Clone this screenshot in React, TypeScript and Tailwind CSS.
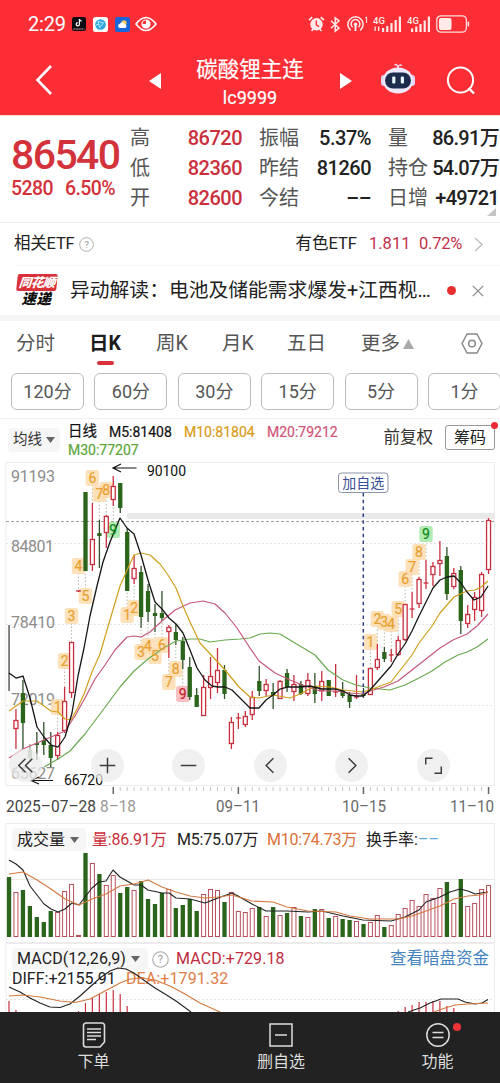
import type { ReactNode } from 'react'

type Candle = [kind: 'r' | 'g', high: number, low: number, top: number, bottom: number]

const STEP = 6.95
const cx = (i: number) => 9 + i * STEP

const RED = '#c9303f'
const GREEN = '#2b641b'

const candles: Candle[] = [
  ['g', 625, 691, 690, 691], ['r', 709, 749, 720, 729], ['g', 680, 749, 693, 723], ['g', 744, 762, 750, 758],
  ['g', 732, 760, 743, 745], ['g', 722, 755, 740, 745], ['g', 732, 767, 745, 758], ['r', 732, 760, 735, 756],
  ['r', 687, 733, 701, 731], ['r', 642, 698, 642, 693], ['r', 590, 592, 591, 591], ['g', 492, 571, 492, 571],
  ['r', 503, 571, 539, 565], ['g', 520, 568, 533, 536], ['r', 515, 548, 516, 533], ['r', 476, 506, 486, 500],
  ['g', 483, 513, 483, 508], ['g', 528, 591, 532, 591], ['r', 555, 584, 568, 579], ['g', 566, 628, 572, 617],
  ['g', 584, 622, 591, 612], ['g', 604, 632, 613, 616], ['g', 591, 621, 613, 618], ['r', 625, 658, 627, 632],
  ['g', 624, 645, 632, 640], ['g', 637, 669, 641, 660], ['g', 657, 700, 667, 697], ['g', 688, 707, 695, 707],
  ['r', 675, 716, 687, 716], ['r', 657, 699, 676, 688], ['r', 648, 693, 670, 683], ['g', 665, 699, 670, 694],
  ['r', 717, 749, 722, 744], ['r', 713, 729, 718, 718], ['r', 711, 727, 716, 725], ['r', 691, 720, 697, 715],
  ['g', 666, 696, 681, 691], ['r', 679, 696, 684, 691], ['g', 683, 709, 692, 696], ['r', 680, 699, 681, 699],
  ['g', 669, 692, 673, 687], ['r', 675, 701, 684, 692], ['g', 681, 695, 684, 694], ['r', 673, 696, 680, 694],
  ['g', 673, 703, 686, 694], ['r', 671, 701, 681, 691], ['g', 680, 696, 680, 696], ['r', 664, 697, 692, 692],
  ['g', 682, 698, 690, 696], ['g', 692, 708, 695, 702], ['r', 675, 699, 697, 697], ['g', 688, 698, 694, 696],
  ['r', 668, 695, 668, 695], ['r', 644, 670, 659, 668], ['g', 647, 662, 652, 659], ['r', 649, 662, 655, 655],
  ['r', 636, 656, 640, 655], ['r', 604, 641, 604, 640], ['r', 592, 618, 609, 609], ['r', 577, 608, 579, 604],
  ['r', 560, 589, 583, 583], ['r', 562, 586, 566, 575], ['r', 541, 576, 560, 564], ['g', 547, 600, 556, 594],
  ['r', 568, 589, 573, 587], ['g', 566, 634, 570, 621], ['r', 605, 628, 614, 624], ['r', 592, 621, 597, 610],
  ['r', 572, 617, 574, 611], ['r', 518, 574, 520, 570],
]

// bar heights in px, measured from the baseline of the volume panel
const volumes = [
  60, 45, 47, 31, 20, 15, 26, 25, 46, 53, 2, 84, 74, 63, 52, 62, 44, 50, 47, 56, 38, 33, 44, 48, 29, 32, 38, 26, 43,
  48, 47, 35, 45, 26, 25, 29, 30, 21, 30, 22, 24, 30, 21, 20, 28, 28, 19, 21, 18, 17, 16, 13, 15, 22, 10, 12, 23, 29,
  37, 31, 43, 39, 49, 55, 34, 58, 31, 34, 48, 52,
]

const ma5 = '9,673 16,678 23,676 30,698 37,727 44,737 51,745 58,747 65,737 72,713 78,676 84,648 90,616 97,586 103,562 110,542 120,518 127,528 134,534 141,555 148,580 155,602 162,609 169,618 176,624 183,633 190,650 197,668 205,680 212,686 218,687 225,687 232,690 240,698 250,708 259,708 266,700 273,695 280,689 287,687 300,687 310,686 322,689 336,689 343,691 350,695 356,696 363,696 370,690 377,682 384,674 391,666 398,654 405,644 412,631 419,616 426,602 433,588 440,580 447,577 454,576 461,583 467,592 474,600 481,597 488,586'
const ma10 = '9,711 16,706 23,701 37,701 44,706 51,711 58,712 65,719 71,720 77,709 84,694 92,672 100,654 107,630 120,586 128,568 134,555 141,553 150,555 160,564 168,575 176,588 183,606 190,622 200,643 213,657 225,670 239,687 250,697 259,698 273,695 290,698 300,694 315,686 330,687 343,690 363,692 375,688 391,682 405,664 412,655 419,643 432,626 440,613 454,597 467,591 475,590 481,587 488,581'
const ma20 = '9,758 23,749 37,743 51,737 65,731 75,716 85,698 95,679 105,665 115,650 127,637 134,636 141,637 150,632 162,621 175,610 190,603 203,601 215,604 225,613 237,628 250,648 259,661 275,673 290,680 305,686 320,691 336,691 350,693 363,694 370,691 384,687 398,681 412,670 426,659 440,648 453,640 467,634 477,626 488,614'
const ma30 = '44,767 58,759 70,751 85,734 100,714 120,687 134,671 148,659 162,649 176,641 190,639 200,639 210,642 225,640 240,639 250,638 260,634 270,633 280,634 295,643 315,655 328,670 343,680 356,685 370,688 390,690 405,685 419,678 432,671 445,662 458,655 467,652 477,647 488,639'

const volMa5 = '9,860 16,864 23,870 30,886 44,904 51,909 58,912 65,909 72,903 79,905 85,897 92,888 99,882 106,881 113,870 120,877 134,885 141,885 148,890 162,893 169,893 176,898 190,899 205,903 218,898 232,893 238,896 252,904 266,911 287,911 308,912 322,911 343,916 363,920 391,921 405,917 419,910 426,902 440,897 450,892 460,889 468,891 475,894 488,892'
const volMa10 = '9,874 23,872 37,880 51,889 65,899 79,905 92,899 106,894 120,886 134,884 148,880 162,887 176,892 190,896 205,898 218,897 232,895 252,901 273,902 287,907 308,911 336,912 350,916 370,919 398,919 412,916 426,911 440,906 454,899 468,896 480,895 488,892'

const marks: [i: number, y: number, text: string, tone: 'o' | 'g' | 'r'][] = [
  [7, 707, '1', 'o'], [8, 661, '2', 'o'], [9, 616, '3', 'o'], [10, 566, '4', 'o'], [11, 596, '5', 'o'],
  [12, 478, '6', 'o'], [13, 494, '7', 'o'], [14, 490, '8', 'o'], [15, 530, '9', 'g'],
  [17, 615, '1', 'o'], [18, 608, '2', 'o'], [19, 652, '3', 'o'], [20, 646, '4', 'o'], [21, 656, '5', 'o'],
  [22, 645, '6', 'o'], [23, 682, '7', 'o'], [24, 669, '8', 'o'], [25, 694, '9', 'r'],
  [52, 642, '1', 'o'], [53, 619, '2', 'o'], [54, 622, '3', 'o'], [55, 624, '4', 'o'], [56, 609, '5', 'o'],
  [57, 579, '6', 'o'], [58, 567, '7', 'o'], [59, 552, '8', 'o'], [60, 534, '9', 'g'],
]

const tones = {
  o: { bg: '#fddcae', fg: '#e9a02f' },
  g: { bg: '#a3e6a5', fg: '#128a1c' },
  r: { bg: '#f9b4ba', fg: '#c4232f' },
}

function StatusBar() {
  return (
    <div className="h-[46px] shrink-0 flex items-center justify-between pl-7 pr-[30px] pt-0.5 text-white">
      <div className="flex items-center gap-[7px]">
        <span className="text-[20px] leading-none tracking-[-0.2px] w-[37px]">2:29</span>
        <svg width="14" height="14" viewBox="0 0 14 14">
          <rect width="14" height="14" rx="2.5" fill="#0b0b10" />
          <path d="M7.4 2v5.2a1.6 1.6 0 1 1-1.6-1.6M7.4 2.2c.2 1.3 1 1.900 2.200 2" fill="none" stroke="#fff" strokeWidth="1.2" />
          <path d="M1.5 12h11" stroke="#d9a5ab" strokeWidth="1" strokeDasharray="2 .6" />
        </svg>
        <svg width="15" height="15" viewBox="0 0 15 15">
          <rect width="15" height="15" rx="2.5" fill="#fff" />
          <circle cx="7.5" cy="7.5" r="5.3" fill="#31a7de" />
          <path d="M5 4.5l5.5 1.4-3.8 4.6zM3 8l3-1" fill="none" stroke="#bff0ff" strokeWidth=".9" />
        </svg>
        <svg width="15" height="15" viewBox="0 0 15 15">
          <rect width="15" height="15" rx="2.5" fill="#1765d8" />
          <circle cx="9" cy="5.8" r="2.6" fill="#f6cf63" />
          <path d="M4.8 11a2.2 2.2 0 0 1 0-4.3 2.8 2.8 0 0 1 5 .6 1.9 1.9 0 0 1 .4 3.7z" fill="#fff" />
        </svg>
        <svg width="22" height="16" viewBox="0 0 22 16" className="-ml-0.5">
          <path d="M1 8Q11-5 21 8 11 21 1 8z" fill="none" stroke="#fff" strokeWidth="1.6" />
          <circle cx="11" cy="8" r="4.6" fill="#fff" />
          <path d="M11 8V4.6A3.4 3.4 0 0 0 7.6 8z" fill="#fb2e35" />
        </svg>
      </div>
      <div className="flex items-center gap-[5px]">
        <svg width="17" height="16" viewBox="0 0 17 16">
          <circle cx="8.5" cy="8.3" r="6.2" fill="#ffe9e9" />
          <path d="M1 4.2L4.2 1.2M16 4.2l-3.2-3M3.5 15l1.8-2M13.5 15l-1.8-2" stroke="#ffe9e9" strokeWidth="1.7" />
          <path d="M8.3 4.5v4.3l2.8 1.8" fill="none" stroke="#fb2e35" strokeWidth="1.4" />
        </svg>
        <svg width="11" height="17" viewBox="0 0 11 17" fill="none" stroke="#ffe9e9" strokeWidth="1.5">
          <path d="M1 4.8l8 7.4-3.8 3V1.8L9 4.8l-8 7.4" />
        </svg>
        <svg width="22" height="18" viewBox="0 0 22 18" fill="none" stroke="#ffe9e9" strokeWidth="1.5">
          <path d="M4.7 15.3a7.6 7.6 0 1 1 9.6 0M6.6 12.3a4.4 4.4 0 1 1 5.8 0" />
          <circle cx="9.5" cy="9.2" r="1.8" fill="#ffe9e9" stroke="none" />
          <path d="M9.5 10v6" strokeWidth="2" />
          <path d="M19 3l1.6-1v6" strokeWidth="1" />
        </svg>
        <svg width="29" height="18" viewBox="0 0 29 18" fill="#ffe9e9">
          <text x="0" y="8.5" fontSize="9.5" fontWeight="500">4G</text>
          <path d="M1.5 11.5h1.3V16H1.5zM5 11.5h1.3V16H5zM9 13h2.2v4H9zM13.2 11h2.2v6h-2.2zM17.4 8h2.2v9h-2.2zM21.6 5h2.2v12h-2.2zM25.8 1.5H28V17h-2.2z" />
        </svg>
        <svg width="24" height="18" viewBox="0 0 24 18" fill="#ffe9e9">
          <text x="0" y="8.5" fontSize="9.5" fontWeight="500">4G</text>
          <path d="M4 13.500h2.200V17H4zM8.200 11.500h2.200V17H8.200zM12.400 9h2.200v8h-2.200zM16.600 5.500h2.200V17h-2.200zM20.800 1.500H23V17h-2.200z" />
        </svg>
        <svg width="34" height="18" viewBox="0 0 34 18">
          <rect x=".8" y=".8" width="29.6" height="16.4" rx="4.2" fill="none" stroke="#ffdede" strokeWidth="1.3" />
          <rect x="3" y="3" width="12.5" height="12" rx="2" fill="#ffeaea" />
          <rect x="31.6" y="6.5" width="1.6" height="5" rx=".8" fill="#ffdede" />
        </svg>
      </div>
    </div>
  )
}

function TitleBar() {
  return (
    <div className="h-[69px] shrink-0 flex items-center text-white">
      <svg width="20" height="32" viewBox="0 0 20 32" className="ml-[34px] -mt-1">
        <path d="M17 3L3.5 17 17 31" fill="none" stroke="#fff" strokeWidth="2.6" />
      </svg>
      <svg width="12" height="18" viewBox="0 0 12 18" className="ml-[95px]">
        <path d="M12 1v16L0 9z" fill="#fff" />
      </svg>
      <div className="w-[178px] text-center pt-1">
        <div className="text-[21.5px] leading-[30px] [-webkit-text-stroke:0.2px_white]">碳酸锂主连</div>
        <div className="text-[18px] leading-[26px] [-webkit-text-stroke:0.2px_white]">lc9999</div>
      </div>
      <svg width="12" height="18" viewBox="0 0 12 18" className="ml-px">
        <path d="M0 1v16l12-8z" fill="#fff" />
      </svg>
      <svg width="36" height="34" viewBox="0 0 36 34" className="ml-[28px] -mt-1">
        <path d="M18 6c0-3-1.500-4-3.500-3M18 5c.5-2 2.500-2.500 4-1.500" fill="none" stroke="#f4d8ee" strokeWidth="1.5" />
        <rect x="1" y="13" width="6" height="11" rx="3" fill="#d8d3f7" />
        <rect x="29" y="13" width="6" height="11" rx="3" fill="#d8d3f7" />
        <ellipse cx="18" cy="18.5" rx="15.2" ry="13" fill="#eee9fd" />
        <rect x="5" y="10.5" width="26" height="16" rx="8" fill="#1d2b4c" />
        <rect x="12.2" y="14.5" width="3.2" height="7" rx="1" fill="#e9f6ff" />
        <rect x="20.8" y="14.5" width="3.2" height="7" rx="1" fill="#e9f6ff" />
      </svg>
      <svg width="30" height="30" viewBox="0 0 30 30" className="ml-[30px]" fill="none" stroke="#fff" strokeWidth="2">
        <circle cx="14.5" cy="14" r="12.6" />
        <path d="M22.5 22l5.500 5.500" strokeWidth="2.4" />
      </svg>
    </div>
  )
}

function Quote() {
  const left = [['高', '86720'], ['低', '82360'], ['开', '82600']]
  const mid = [['振幅', '5.37%'], ['昨结', '81260'], ['今结', '––']]
  const right = [['量', '86.91万'], ['持仓', '54.07万'], ['日增', '+49721']]
  return (
    <div className="relative h-[108px] shrink-0 flex border-t border-[#fbdcd2] border-b border-b-[#eeeeee] pt-[7px] text-[20px]">
      <div className="w-[130px] pl-[11px] pt-[10px] text-[#d3323b]">
        <div className="text-[41px] leading-[44px] font-medium tracking-[-1.6px]">86540</div>
        <div className="flex gap-[12px] text-[19.5px] leading-6 tracking-[-0.6px] font-medium">
          <span>5280</span>
          <span>6.50%</span>
        </div>
      </div>
      <div className="w-[112px]">
        {left.map(([k, v]) => (
          <div key={k} className="flex justify-between leading-[30px] text-[#555]">
            {k}<span className="text-[#c9303c] font-medium tracking-[-0.5px]">{v}</span>
          </div>
        ))}
      </div>
      <div className="w-[112px] ml-[17px]">
        {mid.map(([k, v]) => (
          <div key={k} className="flex justify-between leading-[30px] text-[#555]">
            {k}<span className="text-[#222] font-medium tracking-[-0.5px]">{v}</span>
          </div>
        ))}
      </div>
      <div className="w-[111px] ml-[17px]">
        {right.map(([k, v]) => (
          <div key={k} className="flex justify-between leading-[30px] text-[#555] whitespace-nowrap">
            {k}<span className="text-[#222] font-medium tracking-[-0.7px]">{v}</span>
          </div>
        ))}
      </div>
      <svg width="9" height="8" viewBox="0 0 9 8" className="absolute right-1 bottom-[6px]">
        <path d="M9 0v8H0z" fill="#c6c6c6" />
      </svg>
    </div>
  )
}

function EtfRow() {
  return (
    <div className="h-[42px] shrink-0 flex items-center pl-[14px] pr-[17px] text-[16.5px] text-[#222]">
      <span className="tracking-[-0.2px]">相关ETF</span>
      <Help className="ml-1" size={15} />
      <span className="ml-auto">有色ETF</span>
      <span className="ml-[12px] text-[#c2304a] w-[42px]">1.811</span>
      <span className="ml-[8px] text-[#c2304a] w-[47px] tracking-[-0.2px]">0.72%</span>
      <svg width="9" height="15" viewBox="0 0 9 15" className="ml-[8px]">
        <path d="M1 1l7 6.5L1 14" fill="none" stroke="#bbb" strokeWidth="1.3" />
      </svg>
    </div>
  )
}

function Help({ className, size }: { className?: string; size: number }) {
  return (
    <svg width={size} height={size} viewBox="0 0 16 16" className={className}>
      <circle cx="8" cy="8" r="7.3" fill="none" stroke="#aaa" strokeWidth="1" />
      <text x="8" y="11.6" textAnchor="middle" fontSize="10.5" fill="#999">?</text>
    </svg>
  )
}

function NewsRow() {
  return (
    <div className="h-[50px] shrink-0 flex items-center border-t border-[#f4f4f4] ml-4 pr-4">
      <div className="w-[41px] flex flex-col items-center italic font-black leading-none">
        <span className="w-[40px] h-[17px] -skew-x-6 rounded-[2px] bg-[#d9303a] text-white text-[12.5px] leading-[17px] text-center tracking-[-0.5px]">同花顺</span>
        <span className="text-[14.5px] leading-[17px] text-[#111] tracking-[0.5px]">速递</span>
      </div>
      <span className="ml-[13px] w-[364px] whitespace-nowrap text-[19.8px] text-[#222]">异动解读：电池及储能需求爆发+江西枧…</span>
      <span className="w-[9px] h-[9px] ml-[13px] shrink-0 rounded-full bg-[#e83030]" />
      <svg width="12" height="12" viewBox="0 0 12 12" className="ml-auto shrink-0">
        <path d="M.8.8l10.400 10.400M11.200.8L.8 11.200" stroke="#888" strokeWidth="1.2" />
      </svg>
    </div>
  )
}

function Tabs() {
  const periods = ['120分', '60分', '30分', '15分', '5分', '1分']
  return (
    <div className="h-[98px] shrink-0 border-b border-[#f0f0f0]">
      <div className="h-[52px] flex text-[19.5px] leading-[46px] text-[#555] pl-[16px] pr-[17px]">
        <span className="w-[73px]">分时</span>
        <span className="w-[67px] font-bold text-[#1c1c1c] relative">
          日K
          <i className="absolute left-[8px] top-[40px] w-[17px] h-1 rounded-full bg-[#d9323a]" />
        </span>
        <span className="w-[66px]">周K</span>
        <span className="w-[65px]">月K</span>
        <span className="w-[74px]">五日</span>
        <span>更多</span>
        <svg width="11" height="10" viewBox="0 0 11 10" className="mt-[18px] ml-[3px]">
          <path d="M5.500 0L11 10H0z" fill="#aaa" />
        </svg>
        <svg width="22" height="21" viewBox="0 0 22 21" className="ml-auto mt-[12px]" fill="none" stroke="#888" strokeWidth="1.5">
          <path d="M6 1h10l5 9.500-5 9.500H6L1 10.500z" strokeLinejoin="round" />
          <circle cx="11" cy="10.5" r="3.3" />
        </svg>
      </div>
      <div className="flex gap-[10.4px] pl-[11px] overflow-hidden">
        {periods.map((p) => (
          <span key={p} className="w-[73px] h-[37px] shrink-0 rounded-[6px] border border-[#bcbcbc] text-center text-[18px] leading-[36px] text-[#555]">
            {p}
          </span>
        ))}
      </div>
    </div>
  )
}

function Caret() {
  return (
    <svg width="9" height="6" viewBox="0 0 9 6" className="shrink-0">
      <path d="M0 0h9L4.500 6z" fill="#666" />
    </svg>
  )
}

function MaRow() {
  return (
    <div className="h-[43px] shrink-0 flex pl-2 pr-[5px] text-[14px]">
      <div className="mt-[9px] w-[52px] h-6 flex items-center gap-1 pl-[5px] rounded-sm bg-[#f6f6f6] text-[14.5px] text-[#333] whitespace-nowrap">
        均线 <Caret />
      </div>
      <div className="ml-2 mt-[4px] leading-[18px] text-[#111] [-webkit-text-stroke:0.2px_currentColor]">
        <div className="flex gap-[11px]">
          <span className="w-[30px] text-[14.5px]">日线</span>
          <span className="w-[64px]">M5:81408</span>
          <span className="w-[72px] text-[#d99a16]">M10:81804</span>
          <span className="text-[#cf5576]">M20:79212</span>
        </div>
        <div className="text-[#5ba63b]">M30:77207</div>
      </div>
      <span className="ml-auto mt-[7px] leading-6 text-[16.5px] text-[#333]">前复权</span>
      <span className="relative ml-3 mt-[6px] w-[50px] h-[25px] border border-[#999] rounded-[3px] text-center text-[16px] leading-[23px] text-[#222]">
        筹码
        <i className="absolute -right-1 -top-1 w-[7px] h-[7px] rounded-full bg-[#ee2b35]" />
      </span>
    </div>
  )
}

function Line({ points, color, width = 1.2 }: { points: string; color: string; width?: number }) {
  return <polyline points={points} fill="none" stroke={color} strokeWidth={width} strokeLinejoin="round" />
}

function KChart() {
  return (
    <div className="relative h-[361px] shrink-0">
      <svg width="500" height="361" viewBox="0 462 500 361">
        <rect x="6" y="462.5" width="488.5" height="323" fill="none" stroke="#ececec" />
        {[543.5, 624.5, 705.5].map((y) => (
          <path key={y} d={`M6 ${y}H494`} stroke="#ddd" strokeDasharray="2 2" strokeWidth=".8" />
        ))}
        <path d="M127 516H494" stroke="#e9e9e9" strokeWidth="6" />
        <path d="M6 521.5H494" stroke="#a5a29b" strokeDasharray="3 2" strokeWidth="1.2" />

        <g fontSize="16" fill="#8c8c8c">
          <text x="11" y="482" textLength="44">91193</text>
          <text x="11" y="552" textLength="43">84801</text>
          <text x="11" y="628" textLength="44">78410</text>
          <text x="11" y="705" textLength="44">72019</text>
          <text x="11" y="779" textLength="44">65627</text>
        </g>

        {marks.map(([i, y]) => {
          const [, high, low] = candles[i]
          const to = y < high ? high : low
          return <path key={i} d={`M${cx(i)} ${y}V${to}`} stroke="#aaa08c" strokeDasharray="1.5 2" strokeWidth=".8" />
        })}

        {marks.map(([i, y, , tone]) => (
          <rect key={i} x={cx(i) - 6.7} y={y - 8} width="13.4" height="16" rx="2.5" fill={tones[tone].bg} fillOpacity=".85" />
        ))}

        {candles.map(([kind, high, low, top, bottom], i) => {
          const x = cx(i)
          if (kind === 'g') {
            return (
              <g key={i} fill={GREEN} opacity={i === 3 ? 0.5 : 1}>
                <rect x={x - 0.6} y={high} width="1.3" height={low - high} fill={i ? '#31502b' : '#444'} />
                {i > 0 && <rect x={x - 2.1} y={top} width="4.3" height={bottom - top} />}
              </g>
            )
          }
          return (
            <g key={i} stroke={RED} strokeWidth="1.3" fill="#fff">
              <path d={`M${x} ${high}V${top}M${x} ${bottom}V${low}`} />
              {bottom - top < 1 ? <path d={`M${x - 2.4} ${top}h4.8`} /> : <rect x={x - 2} y={top + 0.5} width="4" height={bottom - top - 1} />}
            </g>
          )
        })}

        <Line points={ma30} color="#6aaa50" />
        <Line points={ma20} color="#c4587a" />
        <Line points={ma10} color="#cf9f1d" />
        <Line points={ma5} color="#161616" width={1.3} />

        <g fontSize="14" textAnchor="middle">
          {marks.map(([i, y, text, tone]) => (
            <text key={i} x={cx(i)} y={y + 5} fill={tones[tone].fg} stroke={tones[tone].fg} strokeWidth=".2">{text}</text>
          ))}
        </g>

        <path d="M363.3 493V694" stroke="#32428a" strokeWidth="1.5" strokeDasharray="3.5 3.3" />
        <rect x="338.5" y="473" width="49.5" height="19.5" rx="3" fill="#fff" stroke="#8c93a8" />
        <text x="363.3" y="488" textAnchor="middle" fontSize="14" fill="#3a4f94">加自选</text>

        <g fill="none" stroke="#111" strokeWidth="1.2">
          <path d="M136.5 468H114M121 464l-8 4 8 4" />
          <path d="M53 780.5H31M39 777l-8 3.500 8 3.500" />
        </g>
        <g fontSize="14" fill="#111">
          <text x="147" y="476" textLength="39">90100</text>
          <text x="64" y="785" textLength="39">66720</text>
        </g>

        {Array.from({ length: 55 }, (_, k) => k + 15).map((i) => {
          const major = [15, 33, 51, 69].includes(i)
          return <path key={i} d={`M${cx(i)} 787v${major ? 7 : 4}`} stroke={major ? '#666' : '#c4c4c4'} strokeWidth={major ? 1.5 : 1} />
        })}
        <g fontSize="16.5" fill="#6a6a6a" lengthAdjust="spacingAndGlyphs">
          <text x="6" y="811.5" textLength="90" lengthAdjust="spacingAndGlyphs" fill="#444">2025–07–28</text>
          <text x="100" y="811.5" textLength="36" lengthAdjust="spacingAndGlyphs" fill="#999">8–18</text>
          <text x="216" y="811.5" textLength="44" lengthAdjust="spacingAndGlyphs">09–11</text>
          <text x="342" y="811.5" textLength="44" lengthAdjust="spacingAndGlyphs">10–15</text>
          <text x="450" y="811.5" textLength="44" lengthAdjust="spacingAndGlyphs">11–10</text>
        </g>
      </svg>

      <div className="absolute left-[9px] top-[287px] flex gap-[48.5px]">
        <RoundButton><path d="M17 10l-7 7 7 7M24 10l-7 7 7 7" /></RoundButton>
        <RoundButton><path d="M17 9v16M9 17h16" /></RoundButton>
        <RoundButton><path d="M9 17h16" /></RoundButton>
        <RoundButton><path d="M20 9.500L12.500 17l7.500 7.500" /></RoundButton>
        <RoundButton><path d="M14 9.500l7.500 7.500-7.500 7.500" /></RoundButton>
        <RoundButton><path d="M9 16V9.500h7M25 18v7h-7" /></RoundButton>
      </div>
    </div>
  )
}

function RoundButton({ children }: { children: ReactNode }) {
  return (
    <span className="w-[33px] h-[33px] shrink-0 rounded-full bg-[#ebebeb]/75">
      <svg width="33" height="33" viewBox="0 0 34 34" fill="none" stroke="#3c3c3c" strokeWidth="1.5">{children}</svg>
    </span>
  )
}

function VolumePanel() {
  return (
    <div className="relative h-[120px] shrink-0">
      <svg width="500" height="120" viewBox="0 823 500 120" className="absolute inset-0">
        <rect x="6" y="823.5" width="488.5" height="119" fill="none" stroke="#ececec" />
        <path d="M6 879.5H494" stroke="#e8e8e8" />
        {volumes.map((h, i) =>
          candles[i][0] === 'g' ? (
            <rect key={i} x={cx(i) - 2.1} y={937 - h} width="4.3" height={h} fill={GREEN} />
          ) : (
            <rect key={i} x={cx(i) - 2} y={937.5 - h} width="4" height={Math.max(h - 1, 1)} fill="#fff" stroke="#b9505c" />
          )
        )}
        <Line points={volMa5} color="#222" width={1.1} />
        <Line points={volMa10} color="#d5793f" width={1.1} />
      </svg>
      <div className="relative flex items-center h-[23px] pl-[12px] mt-[5px] text-[16px] whitespace-nowrap text-[#222]">
        <span className="w-[74px] h-[23px] flex items-center gap-[5px] pl-[5px] rounded-sm bg-[#f6f6f6]">成交量<Caret /></span>
        <span className="ml-[6px] w-[85px] text-[#c9303c] tracking-[-0.2px]">量:86.91万</span>
        <span className="w-[90px] tracking-[-0.2px]">M5:75.07万</span>
        <span className="w-[99px] text-[#dc7038] tracking-[-0.2px]">M10:74.73万</span>
        <span>换手率:<span className="text-[#5aa7d6]">––</span></span>
      </div>
    </div>
  )
}

function MacdPanel() {
  const bars: [number, number][] = [
    [0, 1001], [1, 1010], [10, 1011], [11, 1003], [12, 998], [13, 994], [14, 992], [15, 990], [16, 994], [17, 1006],
    [56, 1011], [57, 1007], [58, 1005], [59, 1002], [60, 1002], [61, 1001], [62, 1001], [63, 1006], [64, 1008],
  ]
  return (
    <div className="relative h-[69px] shrink-0 overflow-hidden">
      <svg width="500" height="69" viewBox="0 943 500 69" className="absolute inset-0">
        <path d="M6 1012V943.5H494.5V1012" fill="none" stroke="#ececec" />
        <path d="M6 999.5H494" stroke="#ddd" strokeDasharray="2 2" strokeWidth=".8" />
        {bars.map(([i, y]) => (
          <path key={i} d={`M${cx(i)} ${y}V1012`} stroke={RED} strokeWidth="1.2" />
        ))}
      </svg>
      <div className="relative mt-[5px] pl-[12px] pr-[11px] h-[22px] flex items-center text-[16px] whitespace-nowrap text-[#222]">
        <span className="w-[136px] h-[22px] flex items-center gap-[5px] pl-[5px] rounded-sm bg-[#f6f6f6] tracking-[0.1px]">
          MACD(12,26,9)<Caret />
        </span>
        <Help className="ml-[4px]" size={17} />
        <span className="ml-[7px] text-[#bf2b40] tracking-[0.1px]">MACD:+729.18</span>
        <span className="ml-auto text-[16.5px] text-[#4584c0]">查看暗盘资金</span>
      </div>
      <div className="relative pl-[12px] leading-[17px] text-[16px] flex text-[#222]">
        <span className="w-[114px]">DIFF:+2155.91</span>
        <span className="text-[#e07d46] tracking-[0.1px]">DEA:+1791.32</span>
      </div>
      <svg width="500" height="69" viewBox="0 943 500 69" className="absolute inset-0">
        <Line points="9,987 20,992 30,998 40,1003 50,1007 60,1007.5 70,1004 80,996 90,987 100,978 110,971 118,968 126,969 134,973 145,981 155,988 165,994 176,1001 191,1012" color="#222" width={1.1} />
        <Line points="9,996 23,995 40,997 60,1001 75,1002.5 90,999 105,991 120,983 130,979 141,978 155,980 170,986 185,994 200,1003 220,1012" color="#d5793f" width={1.1} />
        <Line points="408,1012 420,1008 430,1003 441,999 450,999 458,999 465,1002 475,1004 482,1003 488,999.5" color="#222" width={1.1} />
        <Line points="434,1012 445,1008 455,1005 468,1004 488,1003" color="#d5793f" width={1.1} />
      </svg>
    </div>
  )
}

function BottomNav() {
  return (
    <div className="h-[71px] shrink-0 bg-[#222] flex text-[#ddd] text-[16px]">
      <div className="w-[187px] flex flex-col items-center pt-[10px]">
        <svg width="24" height="26" viewBox="0 0 24 26" fill="none" stroke="#ddd" strokeWidth="1.6">
          <path d="M4 1h16a2.500 2.500 0 0 1 2.500 2.500V20L18 25H4a2.500 2.500 0 0 1-2.500-2.500v-19A2.500 2.500 0 0 1 4 1z" />
          <path d="M5 7h14M5 10.500h14M5 14h14M5 17.500h9" strokeWidth="1.3" />
        </svg>
        <span className="leading-[27px]">下单</span>
      </div>
      <div className="w-[188px] flex flex-col items-center pt-[10px]">
        <svg width="24" height="26" viewBox="0 0 24 26" fill="none" stroke="#ddd" strokeWidth="1.5">
          <path d="M1 2h22v22H1zM6 13h12" />
        </svg>
        <span className="leading-[27px]">删自选</span>
      </div>
      <div className="w-[125px] flex flex-col items-center pt-[10px]">
        <span className="relative">
          <svg width="24" height="26" viewBox="0 0 24 26" fill="none" stroke="#ddd" strokeWidth="1.5">
            <circle cx="12" cy="13" r="11.2" />
            <path d="M6.500 10.500h11M6.500 15.500h11" />
          </svg>
          <i className="absolute left-[27px] top-px w-2 h-2 rounded-full bg-[#ee3237]" />
        </span>
        <span className="leading-[27px]">功能</span>
      </div>
    </div>
  )
}

export default function App() {
  return (
    <div className="w-[500px] h-[1083px] flex flex-col overflow-hidden bg-white font-['Roboto','Noto_Sans_CJK_SC',sans-serif]">
      <div className="bg-[#fb2e35] shrink-0">
        <StatusBar />
        <TitleBar />
      </div>
      <Quote />
      <EtfRow />
      <NewsRow />
      <div className="h-[6px] shrink-0 bg-[#f5f5f5]" />
      <Tabs />
      <MaRow />
      <KChart />
      <VolumePanel />
      <MacdPanel />
      <BottomNav />
    </div>
  )
}
